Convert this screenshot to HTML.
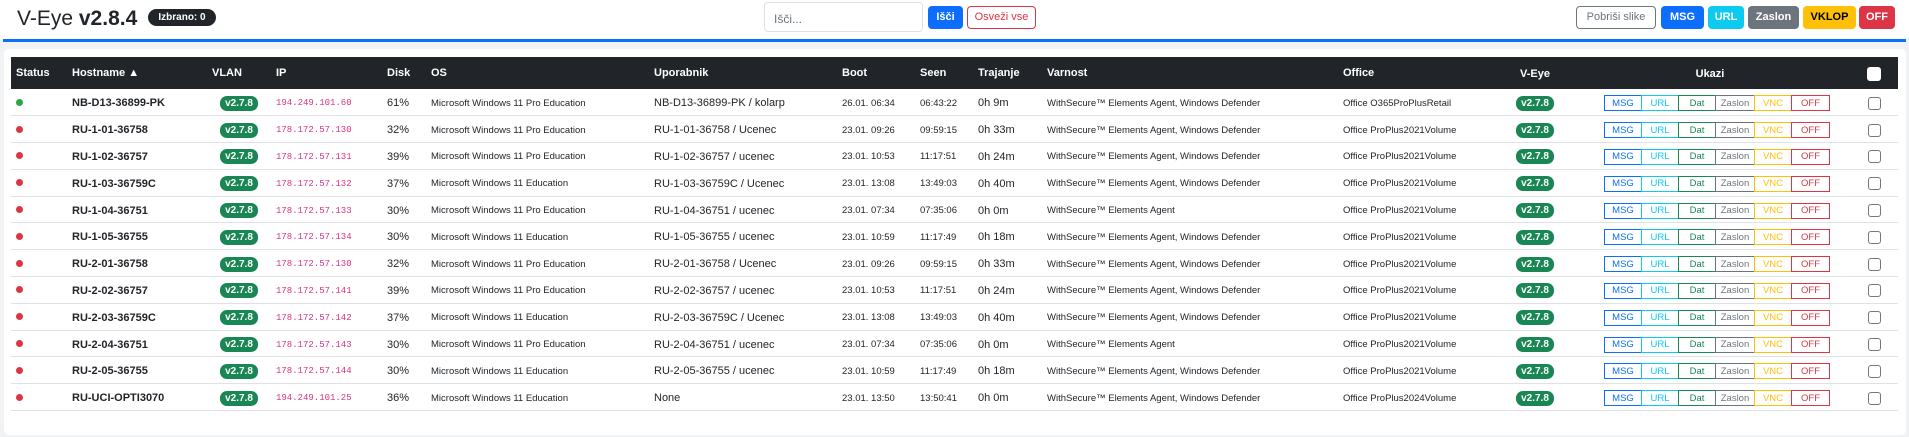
<!DOCTYPE html>
<html><head><meta charset="utf-8"><style>
*{box-sizing:border-box}
body{margin:0;width:1909px;height:437px;background:#f1f2f3;font-family:"Liberation Sans",sans-serif;color:#212529;overflow:hidden;position:relative}
.top{position:absolute;left:0;top:0;width:1909px;height:39px;background:#fff}
.blue{position:absolute;left:3px;top:39px;width:1903px;height:3px;background:#0d6efd}
.title{position:absolute;left:17px;top:5px;font-size:21px;line-height:28px}
.ib{position:absolute;left:148px;top:9px;width:68px;height:17px;border-radius:9px;background:#212529;color:#fff;font-size:10px;font-weight:700;text-align:center;line-height:17px}
.inp{position:absolute;left:764px;top:2px;width:159px;height:30px;border:1px solid #dee2e6;border-radius:4px;font-size:12px;color:#6c757d;padding:9px 0 0 9px;background:#fff}
.b{position:absolute;top:6px;height:23px;border-radius:4px;font-size:11px;text-align:center;line-height:21px;border:1px solid transparent}
.card{position:absolute;left:4px;top:49px;width:1902px;height:386px;background:#fff;border-radius:5px}
table{position:absolute;left:11px;top:57px;width:1887px;border-collapse:collapse;table-layout:fixed}
th{background:#212529;color:#fff;font-size:11px;font-weight:700;height:32px;text-align:left;padding:0 0 0 5px}
td{height:26.8px;border-bottom:1px solid #dee2e6;font-size:10px;padding:2px 0 0 5px;white-space:nowrap;overflow:hidden}
.c{text-align:center;padding:2px 0 0 0}
.dot{display:inline-block;width:7px;height:7px;border-radius:50%;background:#dc3545}
.g{background:#28a745}
.h{font-weight:700;font-size:11px}
.bd{display:inline-block;background:#198754;color:#fff;font-weight:700;font-size:10px;padding:2px 5px;border-radius:7px;line-height:11px}
.ip{font-family:"Liberation Mono",monospace;color:#d63384;font-size:9px}
.u{font-size:11px}
.s{font-size:9.5px}
.k{display:flex}
.k span{display:flex;align-items:center;justify-content:center;height:16px;border:1px solid;font-size:9.5px;margin-left:-1px}
.cb{display:inline-block;width:13px;height:13px;border:1px solid #777;border-radius:3px;vertical-align:middle;background:#fff}
</style></head><body>
<div class="top"></div><div class="blue"></div>
<div class="title">V-Eye <b>v2.8.4</b></div>
<div class="ib">Izbrano: 0</div>
<div class="inp">Išči...</div>
<div class="b" style="left:928px;width:35px;background:#0d6efd;color:#fff;font-weight:700">Išči</div>
<div class="b" style="left:967px;width:69px;border-color:#dc3545;color:#dc3545;background:#fff">Osveži vse</div>
<div class="b" style="left:1576px;width:80px;border-color:#6c757d;color:#6c757d;background:#fff">Pobriši slike</div>
<div class="b" style="left:1661px;width:43px;background:#0d6efd;color:#fff;font-weight:700">MSG</div>
<div class="b" style="left:1708px;width:36px;background:#0dcaf0;color:#fff;font-weight:700">URL</div>
<div class="b" style="left:1748px;width:51px;background:#6c757d;color:#fff;font-weight:700">Zaslon</div>
<div class="b" style="left:1803px;width:53px;background:#ffc107;color:#000;font-weight:700">VKLOP</div>
<div class="b" style="left:1859px;width:36px;background:#dc3545;color:#fff;font-weight:700">OFF</div>
<div class="card"></div>
<table>
<colgroup><col style="width:56px"><col style="width:140px"><col style="width:64px"><col style="width:111px"><col style="width:44px"><col style="width:223px"><col style="width:188px"><col style="width:78px"><col style="width:58px"><col style="width:69px"><col style="width:296px"><col style="width:162px"><col style="width:70px"><col style="width:280px"><col style="width:48px"></colgroup>
<tr><th>Status</th><th>Hostname ▲</th><th>VLAN</th><th>IP</th><th>Disk</th><th>OS</th><th>Uporabnik</th><th>Boot</th><th>Seen</th><th>Trajanje</th><th>Varnost</th><th>Office</th><th class="c">V-Eye</th><th class="c">Ukazi</th><th class="c"><span class="cb" style="border-color:#fff;width:14px;height:14px"></span></th></tr>
</table>
<script>
var r=[["g","NB-D13-36899-PK","194.249.101.60","61%","Microsoft Windows 11 Pro Education","NB-D13-36899-PK / kolarp","26.01. 06:34","06:43:22","0h 9m","WithSecure™ Elements Agent, Windows Defender","Office O365ProPlusRetail"],
["","RU-1-01-36758","178.172.57.130","32%","Microsoft Windows 11 Pro Education","RU-1-01-36758 / Ucenec","23.01. 09:26","09:59:15","0h 33m","WithSecure™ Elements Agent, Windows Defender","Office ProPlus2021Volume"],
["","RU-1-02-36757","178.172.57.131","39%","Microsoft Windows 11 Pro Education","RU-1-02-36757 / ucenec","23.01. 10:53","11:17:51","0h 24m","WithSecure™ Elements Agent, Windows Defender","Office ProPlus2021Volume"],
["","RU-1-03-36759C","178.172.57.132","37%","Microsoft Windows 11 Education","RU-1-03-36759C / Ucenec","23.01. 13:08","13:49:03","0h 40m","WithSecure™ Elements Agent, Windows Defender","Office ProPlus2021Volume"],
["","RU-1-04-36751","178.172.57.133","30%","Microsoft Windows 11 Pro Education","RU-1-04-36751 / ucenec","23.01. 07:34","07:35:06","0h 0m","WithSecure™ Elements Agent","Office ProPlus2021Volume"],
["","RU-1-05-36755","178.172.57.134","30%","Microsoft Windows 11 Education","RU-1-05-36755 / ucenec","23.01. 10:59","11:17:49","0h 18m","WithSecure™ Elements Agent, Windows Defender","Office ProPlus2021Volume"],
["","RU-2-01-36758","178.172.57.130","32%","Microsoft Windows 11 Pro Education","RU-2-01-36758 / Ucenec","23.01. 09:26","09:59:15","0h 33m","WithSecure™ Elements Agent, Windows Defender","Office ProPlus2021Volume"],
["","RU-2-02-36757","178.172.57.141","39%","Microsoft Windows 11 Pro Education","RU-2-02-36757 / ucenec","23.01. 10:53","11:17:51","0h 24m","WithSecure™ Elements Agent, Windows Defender","Office ProPlus2021Volume"],
["","RU-2-03-36759C","178.172.57.142","37%","Microsoft Windows 11 Education","RU-2-03-36759C / Ucenec","23.01. 13:08","13:49:03","0h 40m","WithSecure™ Elements Agent, Windows Defender","Office ProPlus2021Volume"],
["","RU-2-04-36751","178.172.57.143","30%","Microsoft Windows 11 Pro Education","RU-2-04-36751 / ucenec","23.01. 07:34","07:35:06","0h 0m","WithSecure™ Elements Agent","Office ProPlus2021Volume"],
["","RU-2-05-36755","178.172.57.144","30%","Microsoft Windows 11 Education","RU-2-05-36755 / ucenec","23.01. 10:59","11:17:49","0h 18m","WithSecure™ Elements Agent, Windows Defender","Office ProPlus2021Volume"],
["","RU-UCI-OPTI3070","194.249.101.25","36%","Microsoft Windows 11 Education","None","23.01. 13:50","13:50:41","0h 0m","WithSecure™ Elements Agent, Windows Defender","Office ProPlus2024Volume"]];
var h="";r.forEach(function(x){h+='<tr><td><span class="dot '+x[0]+'"></span></td><td class="h">'+x[1]+'</td><td class="c"><span class="bd">v2.7.8</span></td><td class="ip">'+x[2]+'</td><td class="u">'+x[3]+'</td><td class="s">'+x[4]+'</td><td class="u">'+x[5]+'</td><td class="s">'+x[6]+'</td><td class="s">'+x[7]+'</td><td class="u">'+x[8]+'</td><td class="s">'+x[9]+'</td><td class="s">'+x[10]+'</td><td class="c"><span class="bd">v2.7.8</span></td><td style="padding-left:34px"><div class="k"><span style="width:38px;border-color:#0d6efd;color:#0d6efd;margin-left:0">MSG</span><span style="width:38px;border-color:#0dcaf0;color:#0dcaf0">URL</span><span style="width:38px;border-color:#198754;color:#198754">Dat</span><span style="width:40px;border-color:#6c757d;color:#6c757d">Zaslon</span><span style="width:38px;border-color:#ffc107;color:#ffc107">VNC</span><span style="width:39px;border-color:#dc3545;color:#dc3545">OFF</span></div></td><td class="c"><span class="cb"></span></td></tr>'});
document.querySelector("table").insertAdjacentHTML("beforeend",h);
</script>
</body></html>
